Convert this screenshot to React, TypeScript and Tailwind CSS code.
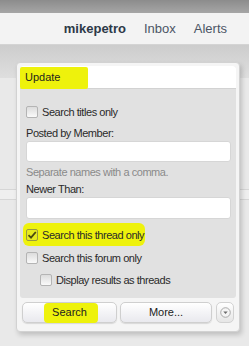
// Search dropdown over a forum header
const HL = "bg-[#eef20c]";

function Box({ checked = false }: { checked?: boolean }) {
  return (
    <span
      className={
        "relative shrink-0 w-[12px] h-[12px] rounded-[2px] border " +
        (checked
          ? "border-[#9a9a40] bg-[#e6ea20]"
          : "border-[#b4b4b4] bg-gradient-to-b from-[#dcdcdc] to-[#fafafa]")
      }
    >
      {checked && (
        <svg viewBox="0 0 12 12" className="absolute -left-[1px] -top-[1px] w-[12px] h-[12px]">
          <path d="M2.5 6.2 L5 8.6 L9.8 3" fill="none" stroke="#4a4a10" strokeWidth="1.8" />
        </svg>
      )}
    </span>
  );
}

function Row({ label, checked, className = "" }: { label: string; checked?: boolean; className?: string }) {
  return (
    <div className={"flex items-center gap-[4px] h-[14px] " + className}>
      <Box checked={checked} />
      <span className="text-[11px] leading-[14px] tracking-[-0.45px] text-[#2a2a2a]">{label}</span>
    </div>
  );
}

function Field({ h }: { h: string }) {
  return <div className={"w-[205px] bg-white rounded-[3px] border border-[#d6d6d6] " + h} />;
}

export default function App() {
  return (
    <div className="relative w-[249px] h-[346px] overflow-hidden bg-[#e9e9e9] font-['Liberation_Sans',Arial,sans-serif]">
      <div className="h-[13px] bg-gradient-to-b from-[#8c8c8c] to-[#a6a6a6]" />
      <div className="h-[32px] bg-[#f3f3f3] border-b border-[#d4d4d4] flex items-center justify-end gap-[18px] pr-[22px] text-[13px]">
        <span className="font-bold text-[#2d3947]">mikepetro</span>
        <span className="text-[#4b5565]">Inbox</span>
        <span className="text-[#4b5565]">Alerts</span>
      </div>
      <div className="h-[33px] bg-gradient-to-b from-[#cdcdcd] to-[#dedede]" />
      <div className="mt-[111px] h-[11px] border-y border-[#d6d6d6] bg-[#efefef]" />

      {/* popup */}
      <div className="absolute left-[16px] top-[62px] w-[224px] h-[270px] rounded-[4px] border border-[#d2d2d2] bg-[#f5f5f5] p-[3px] flex flex-col shadow-[2px_3px_5px_rgba(0,0,0,0.18)]">
        <div className="h-[232px] rounded-[3px] bg-[#e1e1e1] flex flex-col">
          <div className="relative h-[23px] bg-white rounded-t-[3px] border-b border-[#d2d2d2] flex items-center">
            <span className={"absolute left-0 top-[1px] w-[68px] h-[22px] rounded-[2px] " + HL} />
            <span className="relative pl-[5px] text-[11px] text-[#1e1e1e]">Update</span>
          </div>
          <div className="flex flex-col px-[6px]">
            <Row label="Search titles only" className="mt-[16px]" />
            <span className="mt-[7px] text-[11px] leading-[14px] tracking-[-0.45px] text-[#2a2a2a]">Posted by Member:</span>
            <div className="mt-[1px]"><Field h="h-[21px]" /></div>
            <span className="mt-[3px] text-[11px] leading-[14px] tracking-[-0.45px] text-[#8a8a8a]">Separate names with a comma.</span>
            <span className="mt-[3px] text-[11px] leading-[14px] tracking-[-0.45px] text-[#2a2a2a]">Newer Than:</span>
            <div className="mt-[1px]"><Field h="h-[22px]" /></div>
            <div className="relative mt-[9px]">
              <span className={"absolute -left-[3px] -top-[5px] w-[122px] h-[23px] rounded-[6px] " + HL} />
              <Row label="Search this thread only" checked className="relative" />
            </div>
            <Row label="Search this forum only" className="mt-[9px]" />
            <Row label="Display results as threads" className="mt-[8px] pl-[14px]" />
          </div>
        </div>
        <div className="mt-[4px] flex items-center">
          <button className="relative ml-[2px] w-[95px] h-[21px] rounded-[5px] border border-[#cfcfcf] bg-gradient-to-b from-white to-[#e9e9ee] shadow-[0_1px_1px_rgba(0,0,0,0.12)] text-[11px] text-[#222] flex items-center justify-center">
            <span className={"absolute left-[21px] top-[0px] w-[54px] h-[20px] rounded-[4px] " + HL} />
            <span className="relative">Search</span>
          </button>
          <button className="ml-[3px] w-[92px] h-[21px] rounded-[5px] border border-[#cfcfcf] bg-gradient-to-b from-white to-[#e9e9ee] shadow-[0_1px_1px_rgba(0,0,0,0.12)] text-[11px] text-[#222] flex items-center justify-center">
            More...
          </button>
          <button className="ml-[4px] w-[18px] h-[21px] rounded-[5px] border border-[#d2d2d2] bg-gradient-to-b from-white to-[#e6e6e6] flex items-center justify-center">
            <svg viewBox="0 0 12 12" className="w-[11px] h-[11px]">
              <circle cx="6" cy="6" r="5.2" fill="#f4f4f4" stroke="#9a9a9a" strokeWidth="0.9" />
              <path d="M3.6 4.8 L8.4 4.8 L6 7.6 Z" fill="#6a6a6a" />
            </svg>
          </button>
        </div>
      </div>
    </div>
  );
}
